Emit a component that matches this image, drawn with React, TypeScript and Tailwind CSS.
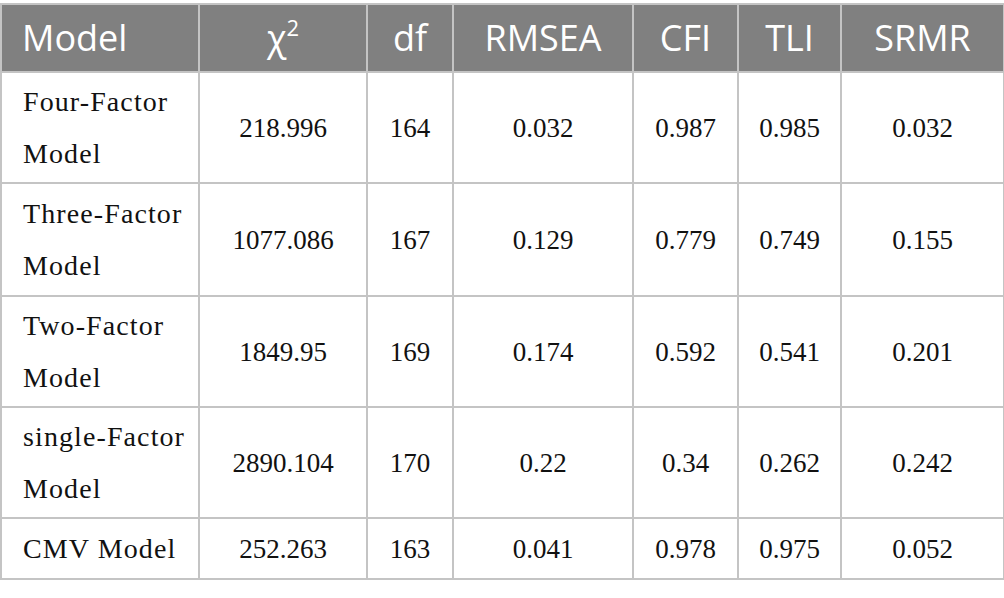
const HEAD_FONT = "font-['Open_Sans',_'DejaVu_Sans',_sans-serif]"
const BODY_FONT = "font-['Liberation_Serif',_'Times_New_Roman',_serif]"

type Row = {
  model: [string, string?]
  chi: string
  df: string
  rmsea: string
  cfi: string
  tli: string
  srmr: string
  h: string
}

const ROWS: Row[] = [
  { model: ['Four-Factor', 'Model'], chi: '218.996', df: '164', rmsea: '0.032', cfi: '0.987', tli: '0.985', srmr: '0.032', h: 'h-[111px]' },
  { model: ['Three-Factor', 'Model'], chi: '1077.086', df: '167', rmsea: '0.129', cfi: '0.779', tli: '0.749', srmr: '0.155', h: 'h-[113px]' },
  { model: ['Two-Factor', 'Model'], chi: '1849.95', df: '169', rmsea: '0.174', cfi: '0.592', tli: '0.541', srmr: '0.201', h: 'h-[111px]' },
  { model: ['single-Factor', 'Model'], chi: '2890.104', df: '170', rmsea: '0.22', cfi: '0.34', tli: '0.262', srmr: '0.242', h: 'h-[111px]' },
  { model: ['CMV Model'], chi: '252.263', df: '163', rmsea: '0.041', cfi: '0.978', tli: '0.975', srmr: '0.052', h: 'h-[61px]' },
]

const cell = 'border-2 border-[#c4c4c4] p-0 align-middle'

export default function App() {
  return (
    <div className="min-h-[598px] w-[1004px] bg-white pt-[3px]">
      <table className="w-[1003px] table-fixed border-collapse">
        <colgroup>
          <col className="w-[198px]" />
          <col className="w-[168px]" />
          <col className="w-[86px]" />
          <col className="w-[180px]" />
          <col className="w-[105px]" />
          <col className="w-[103px]" />
          <col className="w-[163px]" />
        </colgroup>
        <thead>
          <tr className={`h-[68px] bg-[#808080] text-[36px] leading-[50px] font-normal text-white ${HEAD_FONT}`}>
            <th className={`${cell} pl-[20px] text-left font-normal`}>Model</th>
            <th className={`${cell} text-center font-normal`}>
              χ<sup className="relative -top-[2px] align-super text-[22px] leading-none">2</sup>
            </th>
            <th className={`${cell} text-center font-normal`}>df</th>
            <th className={`${cell} text-center font-normal`}>RMSEA</th>
            <th className={`${cell} text-center font-normal`}>CFI</th>
            <th className={`${cell} text-center font-normal`}>TLI</th>
            <th className={`${cell} text-center font-normal`}>SRMR</th>
          </tr>
        </thead>
        <tbody className={`text-[27px] leading-[50px] text-[#111] ${BODY_FONT}`}>
          {ROWS.map(r => (
            <tr key={r.model.join(' ')} className={r.h}>
              <td className={`${cell} pl-[21px] text-left text-[28px] leading-[52px] tracking-[1.1px]`}>
                {r.model[0]}
                {r.model[1] && <br />}
                {r.model[1]}
              </td>
              <td className={`${cell} text-center`}>{r.chi}</td>
              <td className={`${cell} text-center`}>{r.df}</td>
              <td className={`${cell} text-center`}>{r.rmsea}</td>
              <td className={`${cell} text-center`}>{r.cfi}</td>
              <td className={`${cell} text-center`}>{r.tli}</td>
              <td className={`${cell} text-center`}>{r.srmr}</td>
            </tr>
          ))}
        </tbody>
      </table>
    </div>
  )
}
